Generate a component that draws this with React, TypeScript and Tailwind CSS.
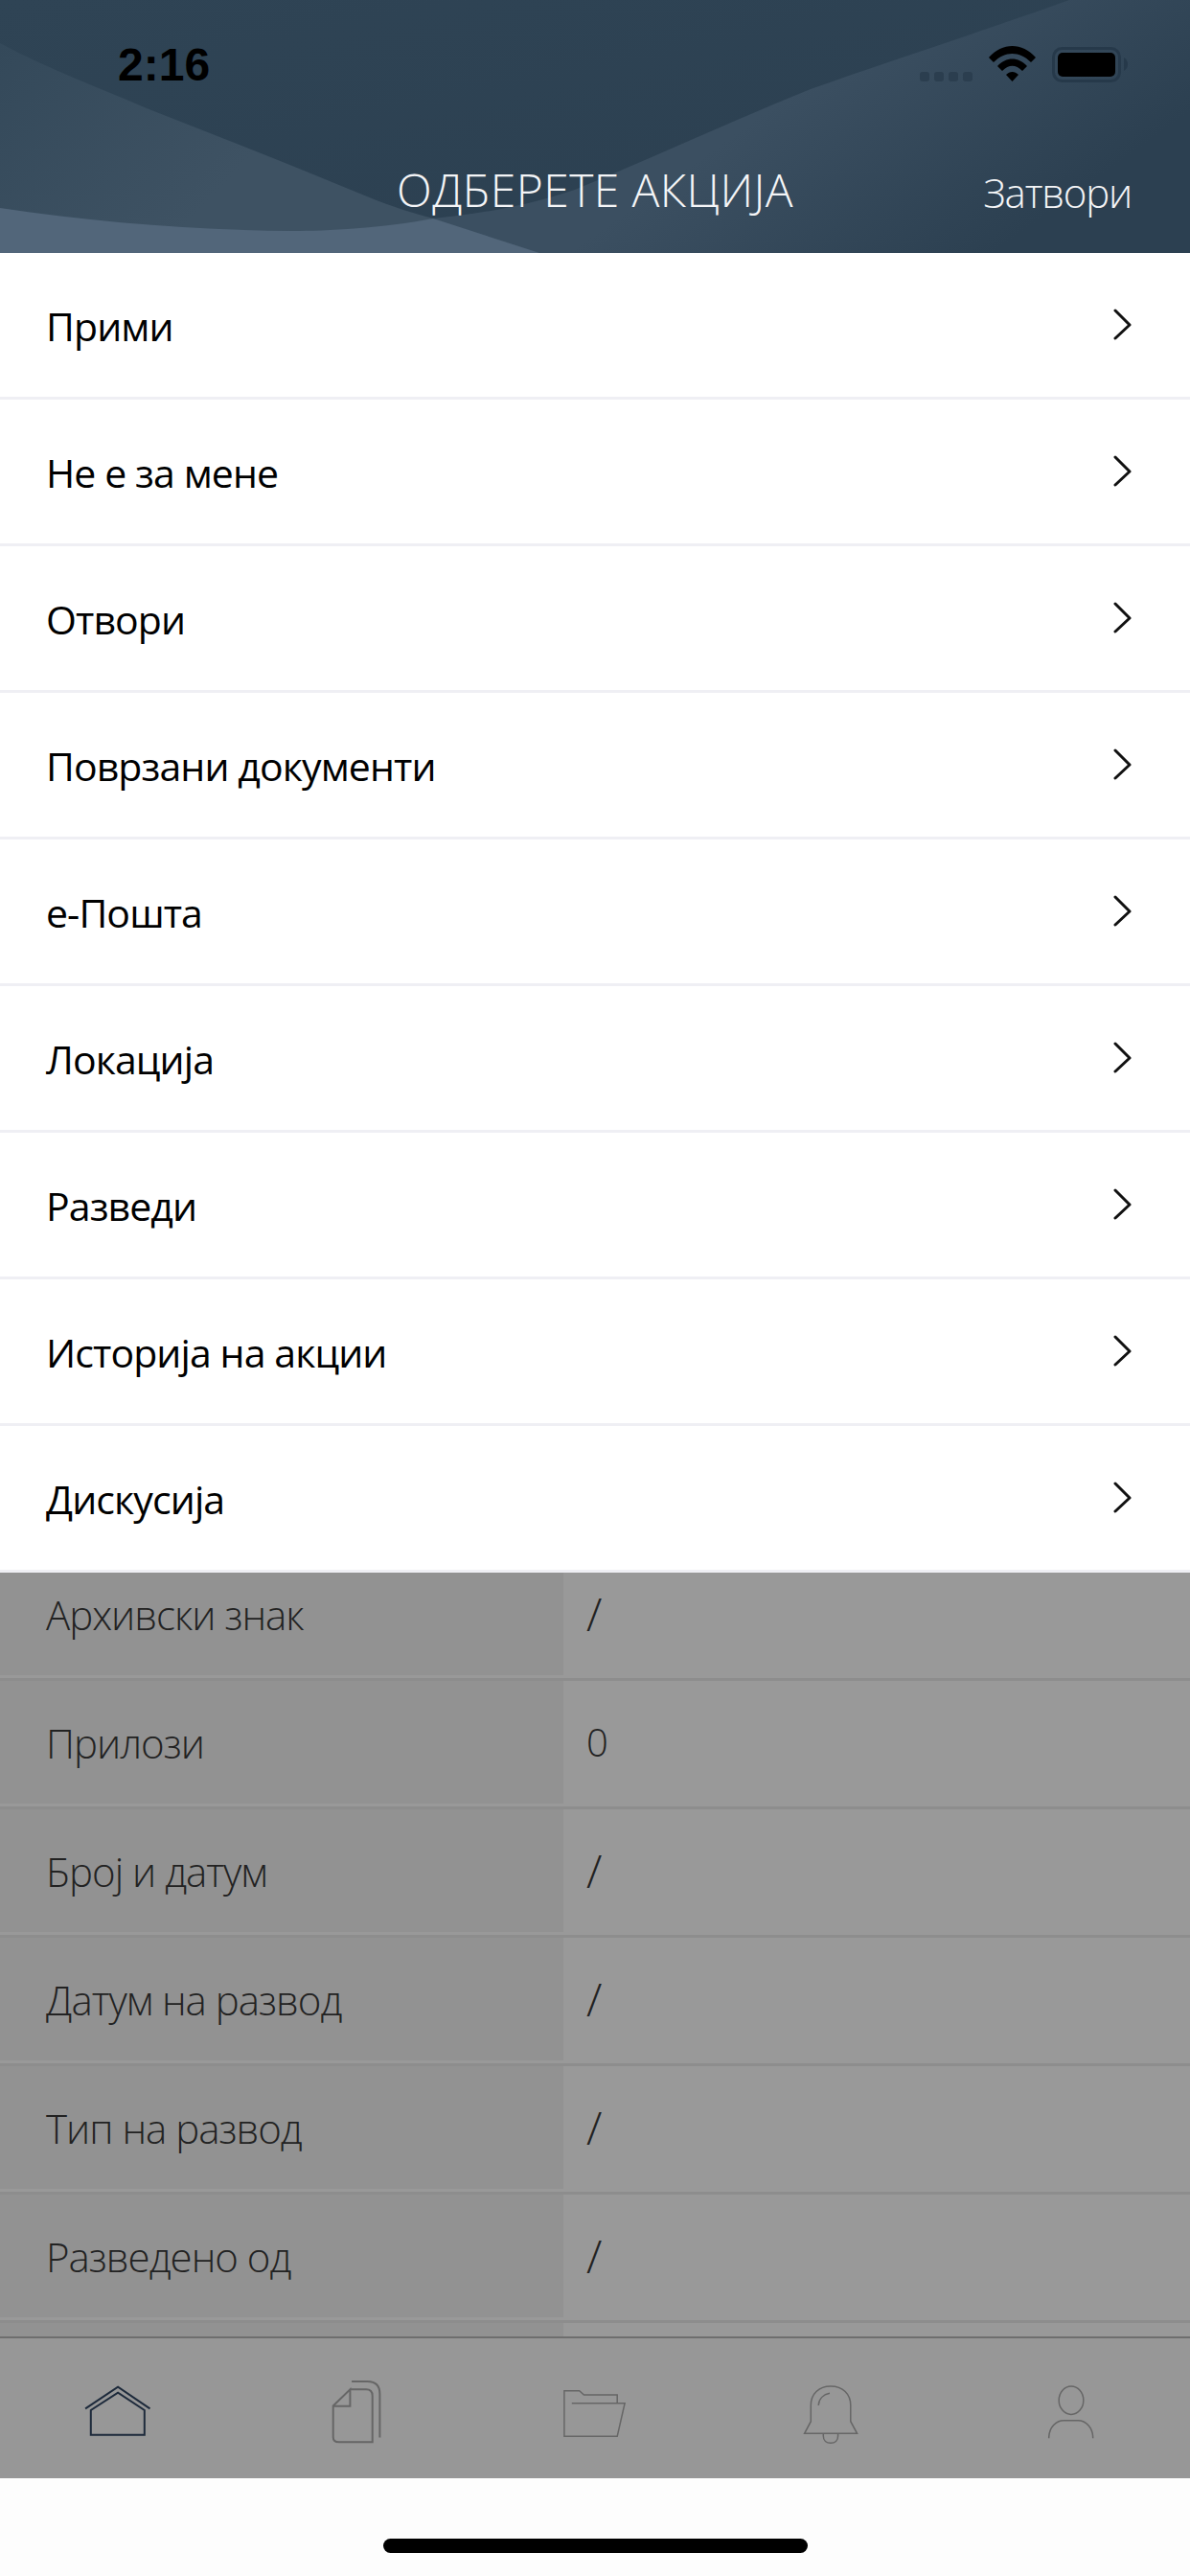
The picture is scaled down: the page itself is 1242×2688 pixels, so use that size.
import React from "react";

const actions = [
  "Прими",
  "Не е за мене",
  "Отвори",
  "Поврзани документи",
  "е-Пошта",
  "Локација",
  "Разведи",
  "Историја на акции",
  "Дискусија",
];

const details = [
  { label: "Архивски знак", value: "/" },
  { label: "Прилози", value: "0" },
  { label: "Број и датум", value: "/" },
  { label: "Датум на развод", value: "/" },
  { label: "Тип на развод", value: "/" },
  { label: "Разведено од", value: "/" },
  { label: "", value: "" },
];

const HeaderWaves = () => (
  <svg className="absolute inset-0" width="1242" height="264" viewBox="0 0 1242 264">
    <defs>
      <linearGradient id="base" x1="0" y1="0" x2="1" y2="1">
        <stop offset="0" stopColor="#2f4455" />
        <stop offset="1" stopColor="#2b3f50" />
      </linearGradient>
      <linearGradient id="band" gradientUnits="userSpaceOnUse" x1="850" y1="80" x2="1000" y2="290">
        <stop offset="0" stopColor="#3b4f61" />
        <stop offset="1" stopColor="#2c4051" />
      </linearGradient>
      <linearGradient id="left" gradientUnits="userSpaceOnUse" x1="0" y1="45" x2="200" y2="230">
        <stop offset="0" stopColor="#34495a" />
        <stop offset="1" stopColor="#3e5263" />
      </linearGradient>
    </defs>
    <rect width="1242" height="264" fill="url(#base)" />
    <path d="M1116 0C1010 38 930 63 846 93C760 128 680 165 600 198C540 218 490 224 452 228C400 238 340 241 306 241C200 240 100 232 0 217V264H1242V0Z" fill="url(#band)" />
    <path d="M0 45C50 72 100 90 153 113C230 143 306 173 383 205C410 216 430 222 452 228L563 264H0Z" fill="url(#left)" />
    <path d="M0 217C100 232 200 240 306 241C340 241 400 238 452 228L563 264H0Z" fill="#52667a" />
  </svg>
);

const StatusIcons = () => (
  <svg className="absolute left-0 top-0" width="1242" height="100" viewBox="0 0 1242 100">
    <g fill="#2b3e4f">
      <rect x="960" y="75" width="10" height="10" rx="3" />
      <rect x="975" y="75" width="10" height="10" rx="3" />
      <rect x="990" y="75" width="10" height="10" rx="3" />
      <rect x="1005" y="75" width="10" height="10" rx="3" />
    </g>
    <path d="M1032 60C1046 44 1067 44 1081 60L1076 65C1064 53 1049 53 1037 65Z" fill="#000" />
    <path d="M1041 69C1050 59 1063 59 1072 69L1067 74C1060 67 1053 67 1046 74Z" fill="#000" />
    <path d="M1050 78C1054 74 1059 74 1063 78L1056.5 85Z" fill="#000" />
    <rect x="1099.5" y="50.5" width="69" height="34" rx="9" fill="none" stroke="#26394a" strokeWidth="3" />
    <rect x="1104" y="55" width="60" height="25" rx="5" fill="#000" />
    <path d="M1173 60C1176 62 1177 64 1177 67C1177 70 1176 72 1173 74Z" fill="#26394a" />
  </svg>
);

const Chevron = () => (
  <svg width="20" height="34" viewBox="0 0 20 34" fill="none" stroke="#111" strokeWidth="3" strokeLinecap="round" strokeLinejoin="round">
    <path d="M2 2L17 17L2 31" />
  </svg>
);

const HomeIcon = () => (
  <svg width="120" height="90" viewBox="64.2 2480 120 90" fill="none" stroke="#1d2a3b" strokeWidth="2">
    <path d="M89.3 2513.3L123.3 2490.7L156.7 2513.3" />
    <path d="M95 2515V2540.7H151V2515L123.3 2496.7Z" />
  </svg>
);

const DocsIcon = () => (
  <svg width="120" height="90" viewBox="312.6 2480 120 90" fill="none" stroke="#666" strokeWidth="2">
    <path d="M366.7 2485H383Q396 2485 396 2498V2543.5" />
    <path d="M365 2493.3H381.7Q388.3 2493.3 388.3 2500V2548.3H353.3Q347.3 2548.3 347.3 2543V2510.5L365 2493.3V2510.7H347.3" />
  </svg>
);

const FolderIcon = () => (
  <svg width="120" height="90" viewBox="561 2480 120 90" fill="none" stroke="#666" strokeWidth="1.5">
    <path d="M644.2 2507V2499H609.4L604.7 2494.7H588.9V2542.3H644.2L652.1 2507.7H596.8" />
  </svg>
);

const BellIcon = () => (
  <svg width="120" height="90" viewBox="809.4 2480 120 90" fill="none" stroke="#666" strokeWidth="1.5">
    <path d="M846.7 2526.7V2510C846.7 2498 855 2490 867.4 2490C880 2490 888.2 2498 888.2 2510V2526.7L895 2539.3H840Z" />
    <path d="M859.7 2539.3V2542C859.7 2546.5 863 2549.3 867.4 2549.3C871.8 2549.3 875 2546.5 875 2542V2539.3" />
    <path d="M854.6 2510C855 2503 860 2498.5 866.4 2497.3" />
  </svg>
);

const UserIcon = () => (
  <svg width="120" height="90" viewBox="1057.8 2480 120 90" fill="none" stroke="#666" strokeWidth="1.5">
    <ellipse cx="1117.8" cy="2504.7" rx="12.8" ry="14.7" />
    <path d="M1094.5 2544.3C1094.5 2533 1102 2525.7 1110 2525.7H1125C1133 2525.7 1140.5 2533 1140.5 2544.3" />
  </svg>
);

export default function App() {
  return (
    <div className="flex h-[2688px] w-[1242px] flex-col overflow-hidden bg-[#fdfdfd] font-['Open_Sans',sans-serif]">
      {/* header + status bar */}
      <div className="relative h-[264px] shrink-0">
        <HeaderWaves />
        <StatusIcons />
        <span className="absolute left-[123px] top-[40px] font-['Liberation_Sans',sans-serif] text-[48px] leading-[56px] font-bold text-black">
          2:16
        </span>
        <div className="relative flex h-full items-start justify-center pt-[167px]">
          <span className="text-[48px] leading-[62px] font-light tracking-[0.4px] text-[#f4f5f7]">
            ОДБЕРЕТЕ АКЦИЈА
          </span>
          <span className="absolute right-[61px] top-[170px] text-[42px] leading-[62px] font-light tracking-[-1.2px] text-[#f4f5f7]">
            Затвори
          </span>
        </div>
      </div>

      {/* action sheet */}
      <div className="shrink-0 bg-white">
        {actions.map((action) => (
          <div
            key={action}
            className="flex h-[153px] items-center justify-between border-b-[3px] border-[#efeff4] pr-[60px] pl-[48px]"
          >
            <span className="pt-[2px] text-[41px] leading-[60px] tracking-[-0.9px] text-black">{action}</span>
            <Chevron />
          </div>
        ))}
      </div>

      {/* dimmed page below */}
      <div className="h-[797px] shrink-0 overflow-hidden bg-[#999999]">
        <div className="-mt-[21px]">
          {details.map((row, i) => (
            <div key={i} className="h-[134px] border-b-[3px] border-[#8d8d8d]">
              <div className="flex h-[128px] items-center">
                <div className="flex h-full w-[588px] items-center bg-[#929292] pl-[48px] text-[42px] font-light tracking-[-1px] text-[#222]">
                  {row.label}
                </div>
                <div className={row.value === "/" ? "pl-[24px] text-[48px] font-light text-[#222]" : "pl-[24px] text-[40px] font-light text-[#222]"}>
                  {row.value}
                </div>
              </div>
            </div>
          ))}
        </div>
      </div>

      {/* tab bar */}
      <div className="grid h-[148px] shrink-0 grid-cols-5 justify-items-center border-t-2 border-[#6e6e6e] bg-[#979797] pt-[40px]">
        <HomeIcon />
        <DocsIcon />
        <FolderIcon />
        <BellIcon />
        <UserIcon />
      </div>

      {/* home indicator */}
      <div className="flex flex-1 justify-center pt-[63px]">
        <div className="h-[15px] w-[443px] rounded-full bg-black" />
      </div>
    </div>
  );
}
